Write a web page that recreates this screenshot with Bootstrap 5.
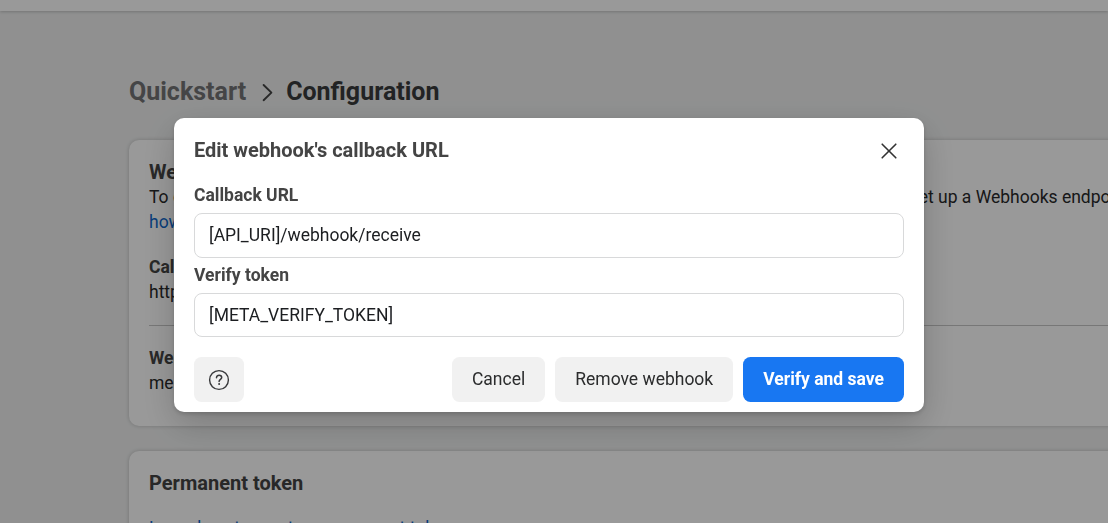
<!DOCTYPE html>
<html lang="en">
<head>
<meta charset="utf-8">
<meta name="viewport" content="width=device-width, initial-scale=1">
<title>Configuration</title>
<link href="https://cdn.jsdelivr.net/npm/bootstrap@5.3.0/dist/css/bootstrap.min.css" rel="stylesheet">
<style>
  body {
    font-family: Roboto, "Liberation Sans", sans-serif;
    font-size: 17.5px;
    line-height: 25px;
    color: #323436;
    background: #f0f1f1;
    height: 100vh;
    overflow: hidden;
  }
  .page a { color: #0f68cc; text-decoration: none; }
  .topbar { height: 11px; background: #fff; box-shadow: 0 1px 3px rgba(0,0,0,.2); }
  .page { width: 1400px; margin-left: 129px; padding-top: 65px; }
  .crumbs { font-size: 25px; line-height: 32px; font-weight: 700; margin-bottom: 32px; }
  .page .crumbs a { color: #737476; }
  .crumbs .current { color: #3a3b3c; }
  .crumbs svg { margin: 0 12px 0 15px; }
  .panel { border: 0; border-radius: 10px; padding: 20px; margin-bottom: 25px; box-shadow: 0 0 4px rgba(0,0,0,.2); color: #28292a; }
  .panel-first { height: 286px; }
  .panel h2 { font-size: 20px; line-height: 25px; font-weight: 700; margin: 0; color: #444; }
  .panel h3 { font-size: 17.5px; line-height: 25px; font-weight: 700; margin: 0; color: #444; }
  .panel p + h3 { margin-top: 20px; }
  .panel hr { margin: 20px 0; color: #000; opacity: .22; }
  .panel hr + h3 { margin-top: 0; }
  .modal-backdrop { --bs-backdrop-opacity: .4; }
  .webhook-modal { padding-right: 10px; }
  .webhook-modal .modal-dialog { max-width: 750px; margin-top: 118px; }
  .webhook-modal .modal-content {
    border: 0; border-radius: 10px; height: 294px; padding: 15px 20px 10px;
    box-shadow: 0 2px 4px rgba(0,0,0,.16), 0 12px 35px rgba(0,0,0,.2);
  }
  .modal-top { margin-bottom: 10px; }
  .modal-name { font-size: 20px; line-height: 34px; font-weight: 700; color: #444; }
  .close-btn { width: 30px; height: 34px; margin-top: 1px; }
  .field-label { font-weight: 700; line-height: 25px; color: #444; margin: 5px 0; }
  .webhook-modal .form-control {
    height: 45px; border-radius: 8px; border-color: #d8d9da; padding: 0 14px 1px;
    font-size: 17.5px; color: #1c1e21; line-height: 25px;
  }
  .webhook-modal #tok { height: 44px; }
  .actions { gap: 10px; }
  .webhook-modal .btn { height: 45px; border: 0; border-radius: 7.5px; font-size: 17.5px; line-height: 25px; padding: 0 20px; }
  .btn-soft { background: #f1f1f1; color: #2b2c2d; }
  .btn-main { background: #1877f2; color: #fff; font-weight: 700; }
  .webhook-modal .btn.btn-help { width: 50px; padding: 0; }
</style>
</head>
<body>
<header class="topbar"></header>
<main class="page">
  <nav class="crumbs d-flex align-items-center" aria-label="breadcrumb">
    <a href="#">Quickstart</a>
    <svg width="13" height="20" viewBox="0 0 13 20" fill="none" stroke="#444" stroke-width="1.9" stroke-linecap="round" stroke-linejoin="round"><path d="M2.6 3l7.8 7.6-7.8 7.6"/></svg>
    <span class="current">Configuration</span>
  </nav>
  <section class="card panel panel-first">
    <h2>Webhook</h2>
    <p class="mb-0 text-nowrap">To get alerted when you receive a message or when a message’s status has changed, you need to set up a Webhooks endpoint for your app. Learn<br><a href="#">how to set up Webhooks.</a></p>
    <h3>Callback URL</h3>
    <p class="mb-0">https://</p>
    <hr>
    <h3>Webhook fields</h3>
    <p class="mb-0">messages</p>
  </section>
  <section class="card panel">
    <h2>Permanent token</h2>
    <p class="mb-0 mt-3 pt-1"><a href="#">Learn how to create a permanent token</a></p>
  </section>
</main>

<div class="modal-backdrop show"></div>
<div class="modal show d-block webhook-modal" role="dialog" aria-modal="true" aria-labelledby="modalName">
  <div class="modal-dialog">
    <div class="modal-content">
      <div class="modal-top d-flex justify-content-between align-items-start">
        <div class="modal-name" id="modalName">Edit webhook's callback URL</div>
        <button type="button" class="close-btn border-0 bg-transparent p-0 d-flex align-items-center justify-content-center" aria-label="Close">
          <svg width="16" height="16" viewBox="0 0 16 16" fill="none" stroke="#333" stroke-width="1.6" stroke-linecap="round"><path d="M1.2 1.2l13.6 13.6M14.8 1.2L1.2 14.8"/></svg>
        </button>
      </div>
      <label class="field-label" for="cb">Callback URL</label>
      <input class="form-control" id="cb" type="text" value="[API_URI]/webhook/receive">
      <label class="field-label" for="tok">Verify token</label>
      <input class="form-control" id="tok" type="text" value="[META_VERIFY_TOKEN]">
      <div class="actions d-flex mt-auto">
        <button type="button" class="btn btn-soft btn-help me-auto d-flex align-items-center justify-content-center" aria-label="Help">
          <svg width="22" height="22" viewBox="0 0 22 22" fill="none" stroke="#38393b" stroke-linecap="round"><circle cx="11" cy="11" r="9.4" stroke-width="1.4"/><path d="M8.5 8.8c0-3.5 5.2-3.2 5.2-.2 0 1.8-2.6 1.9-2.6 4" stroke-width="1.5"/><circle cx="11.1" cy="15" r="1" fill="#38393b" stroke="none"/></svg>
        </button>
        <button type="button" class="btn btn-soft">Cancel</button>
        <button type="button" class="btn btn-soft">Remove webhook</button>
        <button type="button" class="btn btn-main">Verify and save</button>
      </div>
    </div>
  </div>
</div>
<script src="https://cdn.jsdelivr.net/npm/bootstrap@5.3.0/dist/js/bootstrap.bundle.min.js"></script>
</body>
</html>
